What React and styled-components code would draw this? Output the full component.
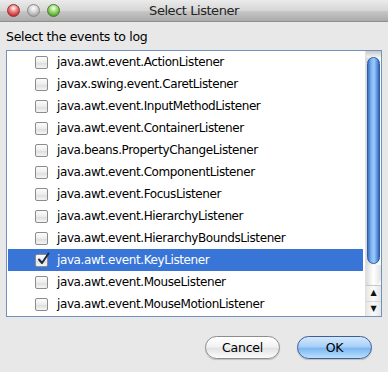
import React, { useState } from 'react'
import styled, { createGlobalStyle } from 'styled-components'

const GlobalStyle = createGlobalStyle`
    html, body {
        margin: 0;
        padding: 0;
        background: #e8e8e8;
        font-family: "DejaVu Sans", "Liberation Sans", sans-serif;
    }
`

const Window = styled.div`
    width: 388px;
    height: 372px;
    background: #e8e8e8;
    display: flex;
    flex-direction: column;
    overflow: hidden;
`

const TitleBar = styled.div`
    height: 22px;
    flex-shrink: 0;
    display: grid;
    grid-template-columns: 1fr auto 1fr;
    align-items: center;
    background: linear-gradient(#ebebeb, #d6d6d6 50%, #c8c8c8 51%, #ababab);
    border-bottom: 1px solid #8f8f8f;
    box-sizing: border-box;
`

const Lights = styled.div`
    display: flex;
    gap: 7px;
    padding-left: 7px;
`

const Light = styled.span`
    width: 13px;
    height: 13px;
    border-radius: 50%;
    box-sizing: border-box;
    border: 1px solid ${(p) => p.edge};
    background: radial-gradient(circle at 50% 30%, #ffffff 0, ${(p) => p.light} 35%, ${(p) => p.color} 80%);
`

const Title = styled.div`
    font-size: 13px;
    letter-spacing: -0.45px;
    color: #222;
`

const Content = styled.div`
    flex: 1;
    display: flex;
    flex-direction: column;
    padding: 0 6px;
`

const Label = styled.div`
    height: 28px;
    display: flex;
    align-items: center;
    font-size: 12.5px;
    letter-spacing: -0.3px;
    color: #000;
    padding-top: 1px;
    box-sizing: border-box;
`

const ListBox = styled.div`
    height: 267px;
    border: 1px solid #6f93bd;
    box-sizing: border-box;
    background: #fff;
    display: flex;
`

const Rows = styled.div`
    flex: 1;
    padding: 0 2px 0 1px;
    display: flex;
    flex-direction: column;
`

const Row = styled.div`
    height: 22px;
    flex-shrink: 0;
    display: flex;
    align-items: center;
    background: ${(p) => (p.selected ? '#3875d7' : 'transparent')};
    color: ${(p) => (p.selected ? '#fff' : '#000')};
    font-size: 12px;
    letter-spacing: -0.4px;
    cursor: default;
`

const Box = styled.span`
    width: 13px;
    height: 13px;
    margin-left: 27px;
    margin-right: 9px;
    box-sizing: border-box;
    border: 1px solid #8c8c8c;
    border-radius: 2px;
    background: linear-gradient(#fdfdfd, #ececec 50%, #dcdcdc 51%, #f4f4f4);
    position: relative;
    flex-shrink: 0;
`

const Check = styled.svg`
    position: absolute;
    left: 0;
    top: -3px;
    width: 14px;
    height: 14px;
`

const ScrollBar = styled.div`
    width: 15px;
    flex-shrink: 0;
    display: flex;
    flex-direction: column;
    background: linear-gradient(90deg, #d8d8d8, #f2f2f2 40%, #fbfbfb);
    border-left: 1px solid #e0e0e0;
`

const Track = styled.div`
    flex: 1;
    display: flex;
    flex-direction: column;
    padding-top: 6px;
    background: linear-gradient(#c8c8c8, #f0f0f0 6px, transparent 7px);
`

const Thumb = styled.div`
    height: 205px;
    margin: 0 1px;
    border-radius: 7px;
    border: 1px solid #2d5da8;
    background: linear-gradient(90deg, #3b6fc4, #7eb5f2 30%, #9ccbf8 55%, #5e98e4 80%, #3563b2);
`

const TrackEnd = styled.div`
    height: 20px;
    margin-top: 1px;
    border-radius: 0 0 7px 7px;
    background: linear-gradient(90deg, #dcdcdc, #ffffff 50%, #e2e2e2);
`

const Arrow = styled.div`
    height: 15px;
    display: flex;
    align-items: center;
    justify-content: center;
    border-top: 1px solid ${(p) => (p.first ? '#c8c8c8' : '#d6d6d6')};
    background: linear-gradient(90deg, #e6e6e6, #fafafa 50%, #e6e6e6);
    font-size: 8px;
    color: #111;
    line-height: 1;
`

const Footer = styled.div`
    flex: 1;
    display: flex;
    justify-content: flex-end;
    align-items: flex-start;
    gap: 17px;
    padding: 19px 10px 0 0;
`

const Button = styled.button`
    width: 75px;
    height: 23px;
    border-radius: 12px;
    font-family: inherit;
    font-size: 12.5px;
    letter-spacing: -0.2px;
    color: #000;
    padding: 0;
    box-sizing: border-box;
    border: 1px solid ${(p) => (p.primary ? '#3d5f95' : '#8d8d8d')};
    background: ${(p) =>
        p.primary
            ? 'linear-gradient(#d5e8fc, #a8d0f8 45%, #7db8f2 55%, #b9e0ff)'
            : 'linear-gradient(#ffffff, #f3f3f3 45%, #e3e3e3 55%, #fbfbfb)'};
    box-shadow: 0 1px 1px rgba(0, 0, 0, 0.18);
`

const listeners = [
    'java.awt.event.ActionListener',
    'javax.swing.event.CaretListener',
    'java.awt.event.InputMethodListener',
    'java.awt.event.ContainerListener',
    'java.beans.PropertyChangeListener',
    'java.awt.event.ComponentListener',
    'java.awt.event.FocusListener',
    'java.awt.event.HierarchyListener',
    'java.awt.event.HierarchyBoundsListener',
    'java.awt.event.KeyListener',
    'java.awt.event.MouseListener',
    'java.awt.event.MouseMotionListener',
]

const App = () => {
    const [checked, setChecked] = useState({ 'java.awt.event.KeyListener': true })
    const selected = 'java.awt.event.KeyListener'

    return (
        <>
            <GlobalStyle />
            <Window>
                <TitleBar>
                    <Lights>
                        <Light color="#c9272b" light="#f08a88" edge="#8e3434" />
                        <Light color="#a4a4a4" light="#dcdcdc" edge="#8a8a8a" />
                        <Light color="#4ea32c" light="#a6e07c" edge="#467a31" />
                    </Lights>
                    <Title>Select Listener</Title>
                    <div />
                </TitleBar>
                <Content>
                    <Label>Select the events to log</Label>
                    <ListBox>
                        <Rows>
                            {listeners.map((name) => (
                                <Row
                                    key={name}
                                    selected={name === selected}
                                    onClick={() => setChecked((c) => ({ ...c, [name]: !c[name] }))}
                                >
                                    <Box>
                                        {checked[name] && (
                                            <Check viewBox="0 0 14 14">
                                                <path
                                                    d="M3 7.5 L6 11 L12.5 1.5"
                                                    fill="none"
                                                    stroke="#1b2b44"
                                                    strokeWidth="2"
                                                    strokeLinecap="round"
                                                    strokeLinejoin="round"
                                                />
                                            </Check>
                                        )}
                                    </Box>
                                    {name}
                                </Row>
                            ))}
                        </Rows>
                        <ScrollBar>
                            <Track>
                                <Thumb />
                                <TrackEnd />
                            </Track>
                            <Arrow first>▲</Arrow>
                            <Arrow>▼</Arrow>
                        </ScrollBar>
                    </ListBox>
                    <Footer>
                        <Button>Cancel</Button>
                        <Button primary>OK</Button>
                    </Footer>
                </Content>
            </Window>
        </>
    )
}

export default App
